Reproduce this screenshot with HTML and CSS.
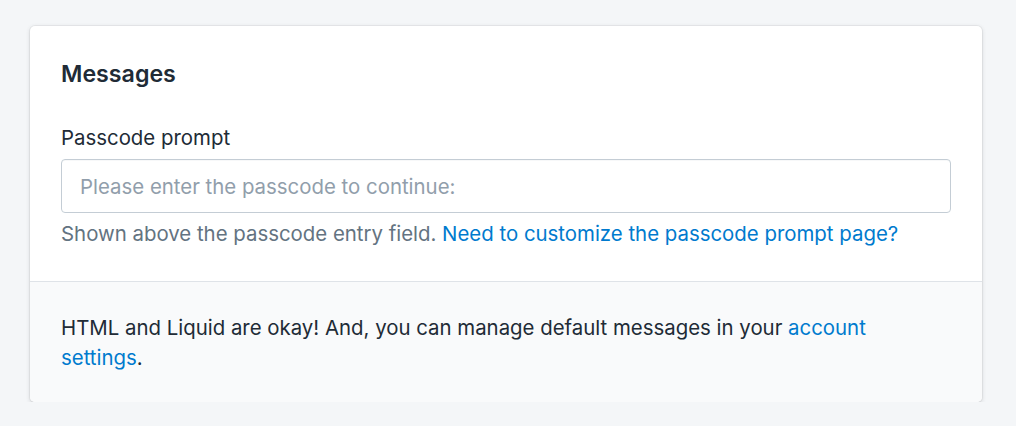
FILE: index.html
```html
<!DOCTYPE html>
<html lang="en">
<head>
<meta charset="utf-8">
<title>Messages</title>
<link rel="stylesheet" href="styles.css">
</head>
<body>
  <div class="card">
    <section class="card-section">
      <h2 class="card-title">Messages</h2>
      <div class="field">
        <label class="label" for="prompt">Passcode prompt</label>
        <input class="input" id="prompt" type="text" placeholder="Please enter the passcode to continue:">
        <p class="help">Shown above the passcode entry field. <a href="#" class="link">Need to customize the passcode prompt page?</a></p>
      </div>
    </section>
    <section class="card-footer">
      <p class="footer-text">HTML and Liquid are okay! And, you can manage default messages in your <a href="#" class="link">account settings</a>.</p>
    </section>
  </div>
</body>
</html>
```

FILE: styles.css
```css
* { box-sizing: border-box; }
html, body { margin: 0; }
body {
  background: #f4f6f8;
  font-family: Inter, "Noto Sans", sans-serif;
  font-size: 20.4px;
  line-height: 30px;
  color: #212b36;
  padding: 26px 0 0 30px;
}
.card {
  width: 952px;
  background: #fff;
  border-radius: 5px;
  box-shadow: 0 0 0 1px rgba(63,63,68,0.05), 0 1.5px 4px 0 rgba(63,63,68,0.18);
  overflow: hidden;
}
.card-section {
  padding: 30px 31px 32px 31px;
}
.card-title {
  margin: 0 0 31px;
  font-size: 23.2px;
  line-height: 36px;
  font-weight: 600;
}
.field { display: flex; flex-direction: column; }
.label {
  display: block;
  margin-bottom: 6px;
}
.input {
  height: 54px;
  width: 100%;
  border: 1.5px solid #c4cdd5;
  border-radius: 4px;
  padding: 0 18px;
  font: inherit;
  color: #212b36;
  background: #fff;
  box-shadow: inset 0 1px 0 0 rgba(99,115,129,0.05);
}
.input::placeholder { color: #919eab; }
.help {
  margin: 6px 0 0;
  color: #637381;
}
.link { color: #007ace; text-decoration: none; }
.card-footer {
  border-top: 1.5px solid #dfe3e8;
  background: #f9fafb;
  padding: 31px 31px 29px;
}
.footer-text { margin: 0; }
```
